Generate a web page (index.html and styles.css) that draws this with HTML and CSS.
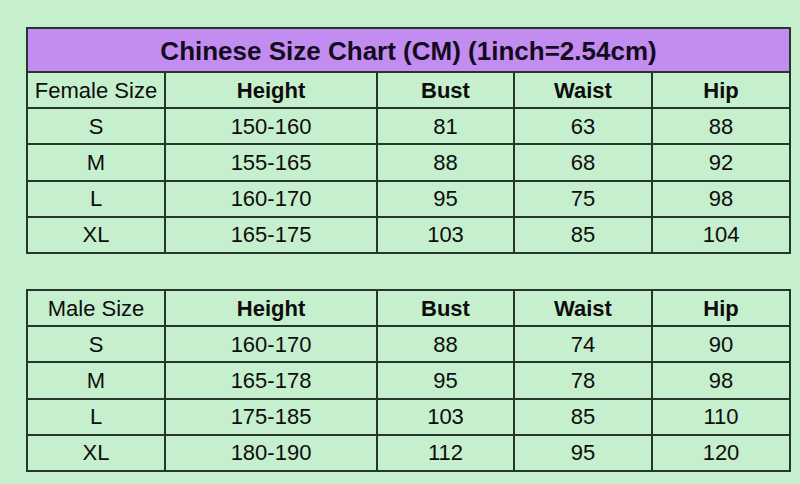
FILE: index.html
```html
<!DOCTYPE html>
<html>
<head>
<meta charset="utf-8">
<link rel="stylesheet" href="styles.css">
</head>
<body>
<div class="page">
  <table class="chart">
    <colgroup><col class="c1"><col class="c2"><col class="c3"><col class="c4"><col class="c5"></colgroup>
    <tr class="title"><th colspan="5">Chinese Size Chart (CM) (1inch=2.54cm)</th></tr>
    <tr class="head"><td class="label">Female Size</td><th>Height</th><th>Bust</th><th>Waist</th><th>Hip</th></tr>
    <tr><td>S</td><td>150-160</td><td>81</td><td>63</td><td>88</td></tr>
    <tr><td>M</td><td>155-165</td><td>88</td><td>68</td><td>92</td></tr>
    <tr><td>L</td><td>160-170</td><td>95</td><td>75</td><td>98</td></tr>
    <tr><td>XL</td><td>165-175</td><td>103</td><td>85</td><td>104</td></tr>
  </table>
  <table class="chart">
    <colgroup><col class="c1"><col class="c2"><col class="c3"><col class="c4"><col class="c5"></colgroup>
    <tr class="head"><td class="label">Male Size</td><th>Height</th><th>Bust</th><th>Waist</th><th>Hip</th></tr>
    <tr><td>S</td><td>160-170</td><td>88</td><td>74</td><td>90</td></tr>
    <tr><td>M</td><td>165-178</td><td>95</td><td>78</td><td>98</td></tr>
    <tr><td>L</td><td>175-185</td><td>103</td><td>85</td><td>110</td></tr>
    <tr><td>XL</td><td>180-190</td><td>112</td><td>95</td><td>120</td></tr>
  </table>
</div>
</body>
</html>
```
FILE: styles.css
```css
html, body {
  margin: 0;
  padding: 0;
  background: #c6efce;
}
.page {
  padding: 27px 0 0 26px;
  display: flex;
  flex-direction: column;
  gap: 35px;
  font-family: "Liberation Sans", Arial, sans-serif;
  color: #0d0d0d;
}
.chart {
  border-collapse: collapse;
  table-layout: fixed;
  width: 763px;
  background: #c6efce;
}
.c1 { width: 138px; }
.c2 { width: 212px; }
.c3 { width: 137px; }
.c4 { width: 138px; }
.c5 { width: 138px; }
.chart td, .chart th {
  border: 2px solid #25362a;
  text-align: center;
  padding: 1px 0 0 0;
  font-size: 22px;
  height: 33.2px;
  line-height: 24px;
}
.chart th { font-weight: bold; }
.chart td { font-weight: normal; }
.chart .title th {
  background: #c28cf0;
  font-size: 26px;
  height: 41px;
  color: #140c1e;
}
```
